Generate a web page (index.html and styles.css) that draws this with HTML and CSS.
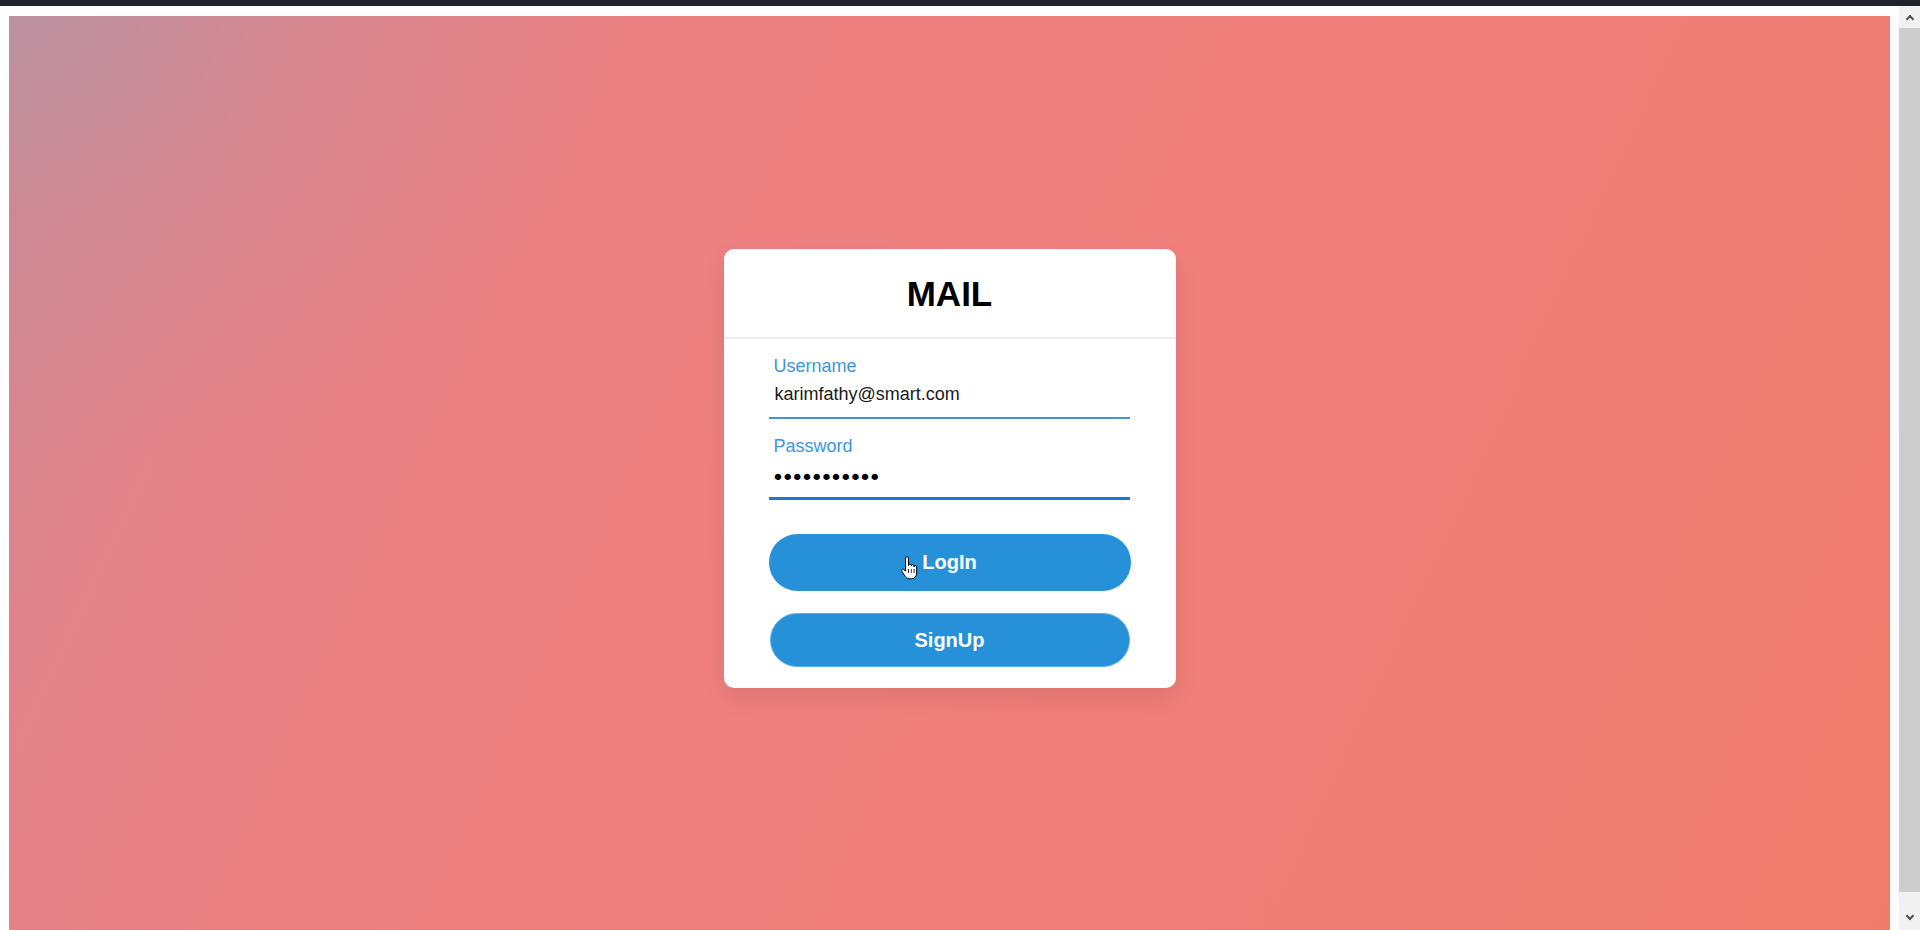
FILE: index.html
```html
<!DOCTYPE html>
<html lang="en">
<head>
<meta charset="utf-8">
<title>MAIL - Login</title>
<link rel="stylesheet" href="styles.css">
</head>
<body>
<div class="topbar"></div>
<div class="viewport">
  <div class="page">
    <div class="bg">
      <div class="card">
        <h1 class="card-title">MAIL</h1>
        <form class="form">
          <div class="field">
            <label class="field-label" for="user">Username</label>
            <input class="field-input" id="user" type="text" value="karimfathy@smart.com">
          </div>
          <div class="field field-pass">
            <label class="field-label" for="pass">Password</label>
            <input class="field-input field-input-focus" id="pass" type="password" value="karimfathy1">
          </div>
          <button type="button" class="btn btn-login">LogIn
            <svg class="cursor" width="18" height="24" viewBox="0 0 18 24"><path d="M5.5 2.2a1.5 1.5 0 0 1 3 0V9.5a1.4 1.4 0 0 1 2.8 0v.6a1.4 1.4 0 0 1 2.8 0v.8a1.3 1.3 0 0 1 2.6 0V17c0 3.2-2 5.8-5 5.8H9.2c-1.8 0-3-.9-4-2.4L1.6 15c-.8-1.1.4-2.5 1.7-1.7L5.5 15Z" fill="#fff" stroke="#000" stroke-width="1" stroke-linejoin="round"/><path d="M8.5 13v4M11.3 13v4M14.1 13v4" stroke="#000" stroke-width=".8"/></svg>
          </button>
          <button type="button" class="btn btn-signup">SignUp</button>
        </form>
      </div>
    </div>
  </div>
  <div class="scrollbar">
    <div class="sb-btn sb-up"><span class="sb-arrow up"></span></div>
    <div class="sb-thumb"></div>
    <div class="sb-btn sb-down"><span class="sb-arrow down"></span></div>
  </div>
</div>
</body>
</html>
```
FILE: styles.css
```css
* { box-sizing: border-box; }
html, body {
  margin: 0;
  padding: 0;
  height: 100%;
  overflow: hidden;
  background: #ffffff;
  font-family: "Liberation Sans", Arial, sans-serif;
}
.topbar {
  height: 6px;
  background: #202129;
}
.viewport {
  display: flex;
  height: calc(100vh - 6px);
}
.page {
  flex: 1;
  padding: 10px 9px 0 9px;
  background: #ffffff;
}
.bg {
  height: 100%;
  display: flex;
  align-items: center;
  justify-content: center;
  padding-bottom: 9px;
  background:
    radial-gradient(ellipse 32% 50% at 0 0, rgba(184,146,162,0.85) 0%, rgba(200,138,150,0.45) 45%, rgba(230,130,135,0) 100%),
    linear-gradient(115deg, #c98a96 0%, #e3838a 15%, #ec8081 30%, #ef7f7c 50%, #ef7d76 75%, #f07d6c 100%);
}
.card {
  width: 452px;
  background: #ffffff;
  border-radius: 10px;
  box-shadow: 0 10px 25px rgba(0,0,0,0.08);
}
.card-title {
  margin: 0;
  padding: 26px 0 24px;
  font-size: 35px;
  line-height: 38px;
  font-weight: bold;
  text-align: center;
  color: #000;
  border-bottom: 2px solid #eeeeee;
}
.form {
  padding: 17px 46px 21px 45px;
}
.field-label {
  display: block;
  height: 20px;
  padding-left: 5px;
  font-size: 18px;
  line-height: 20px;
  color: #3d96dd;
}
.field-input {
  display: block;
  width: 100%;
  height: 43px;
  padding: 0 6px 4px;
  border: none;
  border-bottom: 2px solid #3d95de;
  outline: none;
  background: transparent;
  font-family: "Liberation Sans", Arial, sans-serif;
  font-size: 18px;
  color: #1a1a1a;
}
.field-pass {
  margin-top: 17px;
}
.field-input-focus {
  height: 44px;
  padding: 6px 6px 4px 3px;
  border-bottom: 3px solid #1c78d2;
  font-family: "DejaVu Sans", sans-serif;
  font-size: 22px;
  letter-spacing: -3.3px;
  color: #000;
}
.btn {
  display: flex;
  align-items: center;
  justify-content: center;
  width: 360px;
  height: 54px;
  border: none;
  border-radius: 30px;
  background: #2691d9;
  color: #ffffff;
  font-family: "Liberation Sans", Arial, sans-serif;
  font-size: 20px;
  font-weight: bold;
  cursor: pointer;
}
.btn-login {
  position: relative;
  width: 362px;
  height: 57px;
  margin-top: 34px;
  padding-top: 1px;
}
.btn-signup {
  margin: 22px 0 0 1px;
  border: 1px solid #5aaee6;
}
.cursor {
  position: absolute;
  left: 131px;
  top: 22px;
}
.scrollbar {
  width: 21px;
  display: flex;
  flex-direction: column;
  background: #f1f1f1;
}
.sb-btn {
  display: flex;
  align-items: center;
  justify-content: center;
  background: #f1f1f1;
}
.sb-up { height: 22px; }
.sb-down { height: 38px; padding-top: 14px; }
.sb-thumb {
  flex: 1;
  background: #cdcdcd;
}
.sb-arrow {
  width: 6px;
  height: 6px;
  border-left: 2px solid #505050;
  border-top: 2px solid #505050;
}
.sb-arrow.up { transform: translateY(2px) rotate(45deg); }
.sb-arrow.down { transform: translateY(-2px) rotate(225deg); }
```
